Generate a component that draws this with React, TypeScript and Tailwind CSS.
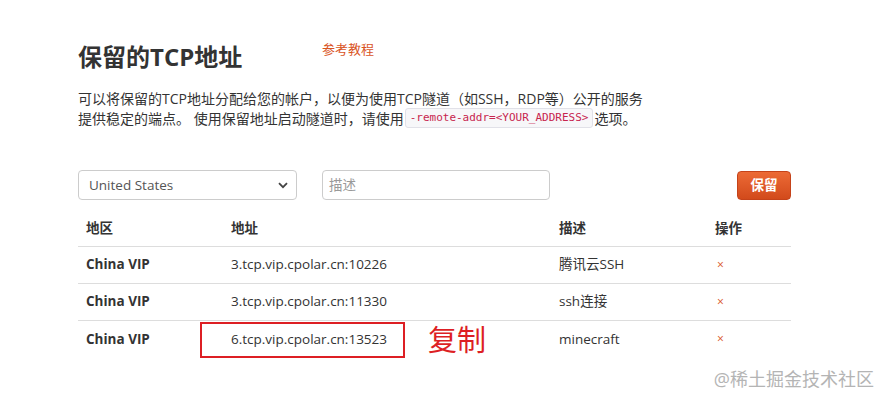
const rows = [
  { region: "China VIP", addr: "3.tcp.vip.cpolar.cn:10226", desc: "腾讯云SSH" },
  { region: "China VIP", addr: "3.tcp.vip.cpolar.cn:11330", desc: "ssh连接" },
  { region: "China VIP", addr: "6.tcp.vip.cpolar.cn:13523", desc: "minecraft", marked: true },
];

const font = { fontFamily: '"Open Sans", "Noto Sans CJK SC", sans-serif' };

export default function App() {
  return (
    <div className="relative w-[889px] h-[403px] bg-white text-[#333] overflow-hidden" style={font}>
      <div className="pl-[78px] pr-[98px] pt-[38px]">
        <div className="flex items-start">
          <h1 className="text-[24px] leading-[38px] font-bold text-[#333] w-[244px]">保留的TCP地址</h1>
          <a className="mt-[2px] text-[13px] leading-[18px] text-[#d9531e]">参考教程</a>
        </div>

        <div className="mt-[13px] text-[14px] leading-[19px] text-[#333]">
          <p>可以将保留的TCP地址分配给您的帐户，以便为使用TCP隧道（如SSH，RDP等）公开的服务</p>
          <p className="flex items-center">
            提供稳定的端点。 使用保留地址启动隧道时，请使用
            <code className="mx-[1px] px-[4px] h-[20px] leading-[18px] rounded-[3px] bg-[#f7f7f9] border border-[#e1e1e8] text-[11px] text-[#c7254e] font-['DejaVu_Sans_Mono',monospace]">
              -remote-addr=&lt;YOUR_ADDRESS&gt;
            </code>
            选项。
          </p>
        </div>

        <div className="mt-[42px] flex items-center h-[30px]">
          <div className="relative w-[219px] h-[30px] border border-[#ccc] rounded-[4px] flex items-center pl-[10px] text-[13.5px] text-[#555]">
            United States
            <svg className="absolute right-[8px] top-[11px]" width="10" height="7" viewBox="0 0 10 7">
              <path d="M1 1.2 L5 5.2 L9 1.2" fill="none" stroke="#444" strokeWidth="1.8" />
            </svg>
          </div>
          <div className="ml-[25px] w-[228px] h-[30px] border border-[#ccc] rounded-[4px] flex items-center pl-[6px] text-[13.5px] text-[#999]">
            描述
          </div>
          <button className="ml-auto w-[54px] h-[29px] rounded-[4px] border border-[#c5431a] bg-gradient-to-b from-[#ec6a35] to-[#d24a1b] text-white text-[13.5px] font-semibold">
            保留
          </button>
        </div>

        <table className="mt-[10px] w-full text-[13.5px] border-collapse">
          <thead>
            <tr className="border-b border-[#ddd] h-[36px] text-left">
              <th className="w-[145px] pl-[8px] font-bold">地区</th>
              <th className="w-[328px] pl-[8px] font-bold">地址</th>
              <th className="w-[156px] pl-[8px] font-bold">描述</th>
              <th className="pl-[8px] font-bold">操作</th>
            </tr>
          </thead>
          <tbody>
            {rows.map((r, i) => (
              <tr key={i} className={`h-[37px] ${i < rows.length - 1 ? "border-b border-[#ddd]" : ""}`}>
                <td className="pl-[8px] font-bold">{r.region}</td>
                <td className="pl-[8px]">
                  {r.marked ? (
                    <div className="relative flex items-center">
                      <span>{r.addr}</span>
                      <div className="absolute left-[-31px] top-[-7px] w-[205px] h-[36px] border-2 border-[#dd1f24]" />
                      <span className="absolute left-[197px] top-[-6px] text-[29px] leading-[34px] text-[#dd1f24]">复制</span>
                    </div>
                  ) : (
                    r.addr
                  )}
                </td>
                <td className="pl-[8px]">{r.desc}</td>
                <td className="pl-[10px] text-[#d9531e] text-[12px]">×</td>
              </tr>
            ))}
          </tbody>
        </table>
      </div>

      <div className="absolute right-[15px] bottom-[14px] text-[18px] leading-[20px] text-[#b4b4b4]">@稀土掘金技术社区</div>
    </div>
  );
}
